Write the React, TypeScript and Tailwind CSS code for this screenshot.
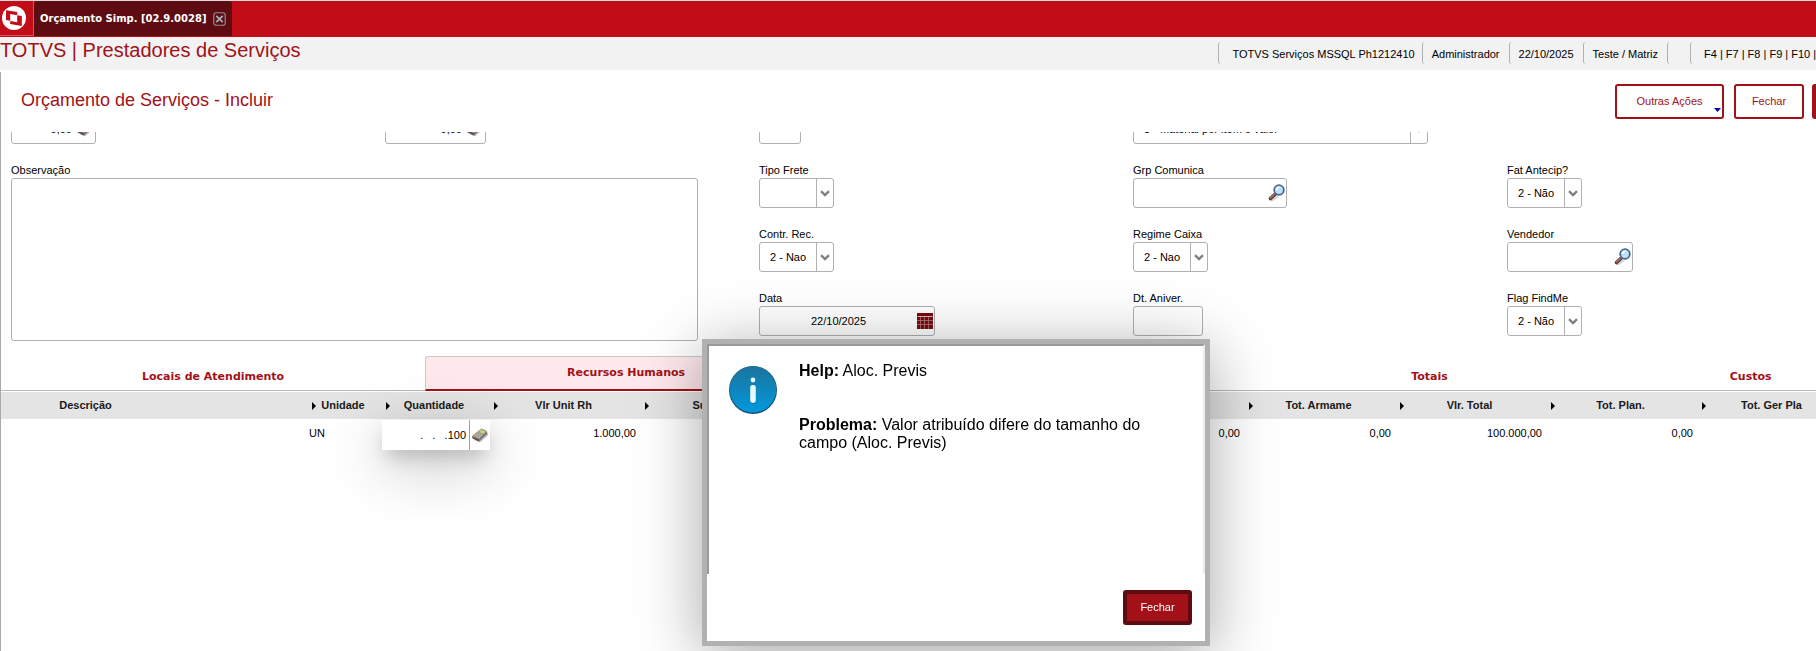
import React, { useState } from 'react';
import type { ReactNode } from 'react';

const SearchIcon = () => (
  <svg width="18" height="18" viewBox="0 0 18 18" className="shrink-0">
    <path d="M4 17 L11 12.5" stroke="#d4d4d4" strokeWidth="2" />
    <path d="M3.5 14.5 L8.5 10" stroke="#4a3a36" strokeWidth="3.6" strokeLinecap="round" />
    <path d="M3.6 13.8 L8 9.8" stroke="#a86a55" strokeWidth="1.8" strokeLinecap="round" />
    <circle cx="12" cy="6" r="4.8" fill="#bfe0f8" stroke="#44688f" strokeWidth="1.8" />
    <path d="M9.5 6a2.8 2.8 0 0 1 3-2.8" stroke="#ffffff" strokeWidth="1.8" fill="none" />
  </svg>
);

const CalculatorIcon = () => (
  <svg width="18" height="16" viewBox="0 0 18 16" className="shrink-0">
    <path d="M3 13 L9 15.5 L17.5 8 L16 5 Z" fill="#c4c4c4" />
    <path d="M1 9 L9.5 2 Q10.5 1.4 11.5 1.8 L16 4 L8 12.5 Z" fill="#a39c90" />
    <path d="M1 9 L8 12.2 L8 14.4 L1.6 11.6 Z" fill="#5b4d48" />
    <path d="M8 12.2 L16 4 L16.2 6.8 L8 14.4 Z" fill="#78706a" />
    <path d="M8 4.8 L10.5 2.8 L14.4 4.5 L12 6.8 Z" fill="#b4dc78" />
    <path d="M4 9 L8 5.8 M6 9.9 L10 6.6 M8 10.7 L11.5 7.4" stroke="#c9c2ba" strokeWidth="1" strokeDasharray="1.4 1" />
  </svg>
);

const CalendarIcon = () => (
  <svg width="16" height="16" viewBox="0 0 16 16" className="shrink-0">
    <rect width="16" height="16" fill="#7a0a0e" />
    <path d="M0.5 3.5H15.5" stroke="#d9b8ba" strokeWidth="1" />
    <path d="M0 7.5H16M0 11.5H16M3.5 4V16M7.5 4V16M11.5 4V16" stroke="#b98a8c" strokeWidth="0.7" />
  </svg>
);

const InfoIcon = () => (
  <svg width="48" height="48" viewBox="0 0 48 48" className="shrink-0">
    <defs>
      <linearGradient id="info" x1="0" y1="0" x2="0" y2="1">
        <stop offset="0" stopColor="#1b739c" />
        <stop offset="1" stopColor="#0299dd" />
      </linearGradient>
    </defs>
    <circle cx="24" cy="24" r="24" fill="#125577" />
    <circle cx="24" cy="23.4" r="23.2" fill="url(#info)" />
    <circle cx="24" cy="14" r="2.4" fill="#e4fbff" />
    <rect x="21.2" y="20" width="5.6" height="18" rx="2.4" fill="#0b6d9b" />
    <rect x="21.2" y="19" width="5.6" height="18" rx="2.4" fill="#e4fbff" />
  </svg>
);

const Logo = () => (
  <svg width="24" height="24" viewBox="0 0 24 24">
    <circle cx="12" cy="12" r="12" fill="#ffffff" />
    <path d="M4 4.3 L15.2 6 V16 L4 14 Z" fill="#c20c18" />
    <path d="M8.2 8.2 L19.8 10 V20 L8.2 18 Z" fill="#c20c18" />
    <path d="M8.2 8 L15.2 9.2 V16.2 L8.2 15 Z" fill="#ffffff" />
  </svg>
);

interface FieldProps {
  id: string;
  label?: string;
  children: ReactNode;
}

const Field = ({ id, label, children }: FieldProps) => (
  <div>
    <label htmlFor={id} className="block h-[14px] leading-3">{label}</label>
    {children}
  </div>
);

interface SelectBoxProps {
  id: string;
  label?: string;
  width?: string;
  options: string[];
}

const SelectBox = ({ id, label, width = 'w-[75px]', options }: SelectBoxProps) => (
  <Field id={id} label={label}>
    <div className={`flex h-[30px] rounded-[3px] border border-[#b0b0b0] ${width}`}>
      <select id={id} aria-label={label ?? id} className="min-w-0 flex-1 appearance-none bg-transparent pl-[10px] outline-none">
        {options.map(o => <option key={o}>{o}</option>)}
      </select>
      <span className="flex w-[17px] shrink-0 items-center justify-center border-l border-[#b0b0b0]">
        <svg width="10" height="7" viewBox="0 0 10 7">
          <path d="M1 1.2 L5 5 L9 1.2" fill="none" stroke="#808080" strokeWidth="2.4" />
        </svg>
      </span>
    </div>
  </Field>
);

interface TextBoxProps {
  id: string;
  label?: string;
  width: string;
  value?: string;
  align?: string;
  icon?: ReactNode;
}

const TextBox = ({ id, label, width, value = '', align = 'text-left', icon }: TextBoxProps) => (
  <Field id={id} label={label}>
    <div className={`flex h-[30px] items-center rounded-[3px] border border-[#b0b0b0] pr-px ${width}`}>
      <input id={id} aria-label={label ?? id} defaultValue={value} className={`h-full min-w-0 flex-1 bg-transparent outline-none ${align}`} />
      {icon}
    </div>
  </Field>
);

const tabs = ['Locais de Atendimento', 'Recursos Humanos', '', 'Totais', 'Custos'];

const columns = [
  { title: 'Descrição', width: 307, value: '' },
  { title: 'Unidade', width: 74, value: 'UN' },
  { title: 'Quantidade', width: 108, value: '100' },
  { title: 'Vlr Unit Rh', width: 151, value: '1.000,00' },
  { title: 'Subtotal', width: 151, value: '' },
  { title: '', width: 151, value: '' },
  { title: '', width: 151, value: '' },
  { title: '', width: 151, value: '0,00' },
  { title: 'Tot. Armame', width: 151, value: '0,00' },
  { title: 'Vlr. Total', width: 151, value: '100.000,00' },
  { title: 'Tot. Plan.', width: 151, value: '0,00' },
  { title: 'Tot. Ger Pla', width: 151, value: '' },
];

const TopBar = () => (
  <header>
    <div className="flex h-[37px] border-t border-[#dcdcdc] bg-[#c20c18]">
      <div className="flex h-[35px] w-[34px] items-center border-r border-b border-[#e2505a] pl-[2px]">
        <Logo />
      </div>
      <div className="flex h-[35px] items-center gap-[6px] rounded-t-[3px] bg-[#5e0c12] px-[6px]">
        <span className="font-['DejaVu_Sans',sans-serif] text-[10px] font-bold text-white">Orçamento Simp. [02.9.0028]</span>
        <button aria-label="Fechar aba">
          <svg width="13" height="14" viewBox="0 0 13 14" className="block">
            <rect x="0.75" y="0.75" width="11.5" height="12.5" rx="2.5" fill="none" stroke="#8f8a92" strokeWidth="1.2" />
            <path d="M3.3 3.8 L9.7 10.2 M9.7 3.8 L3.3 10.2" stroke="#a9adb8" strokeWidth="1.8" />
          </svg>
        </button>
      </div>
    </div>
    <div className="flex h-[33px] items-start justify-between bg-[#f2f2f2]">
      <h1 className="pt-px text-[20px] leading-6 whitespace-nowrap text-[#a31118]">TOTVS | Prestadores de Serviços</h1>
      <div className="mt-[5px] flex h-[22px] shrink-0 leading-[24px] whitespace-nowrap *:rounded-l-[3px] *:border-l *:border-[#b0b0b0] *:px-[9px]">
        <span className="pr-[7px]! pl-[13px]!">TOTVS Serviços MSSQL Ph1212410</span>
        <span>Administrador</span>
        <span>22/10/2025</span>
        <span>Teste / Matriz</span>
        <span className="w-[23px]"></span>
        <span className="w-[126px] pr-0! pl-[13px]!">F4 | F7 | F8 | F9 | F10 |</span>
      </div>
    </div>
  </header>
);

const ItemsTable = () => (
  <table className="mt-px w-[1848px] table-fixed border-collapse">
    <colgroup>
      {columns.map((c, i) => <col key={i} style={{ width: c.width }} />)}
    </colgroup>
    <thead>
      <tr className="h-[27px] bg-[#e4e4e4]">
        {columns.map((c, i) => (
          <th key={i} className="p-0 text-[#1a1a1a]">
            <div className="flex items-center">
              {i > 0 && (
                <svg width="4" height="8" viewBox="0 0 4 8" className="ml-1 shrink-0">
                  <path d="M0 0 L4 4 L0 8 Z" fill="#000000" />
                </svg>
              )}
              <span className={i > 0 ? 'flex-1 pr-3 text-center' : 'flex-1 pr-[138px] text-center'}>{c.title}</span>
            </div>
          </th>
        ))}
      </tr>
    </thead>
    <tbody>
      <tr className="h-[31px]">
        {columns.map((c, i) => (
          c.title === 'Quantidade' ? (
            <td key={i} className="p-0">
              <div className="relative mt-px flex h-[30px] items-center bg-white shadow-[0_10px_20px_-4px_rgba(0,0,0,0.22),0_15px_60px_rgba(0,0,0,0.28)]">
                <input aria-label="Quantidade" defaultValue=".   .   .100" className="h-full min-w-0 flex-1 pr-[3px] text-right outline-none" />
                <span className="flex h-full w-[21px] items-center justify-center border-l border-[#a0a0a0]">
                  <CalculatorIcon />
                </span>
              </div>
            </td>
          ) : (
            <td key={i} className={i === 1 ? 'p-0 pb-[2px] pl-px text-left' : 'p-0 pr-[5px] pb-[2px] text-right'}>{c.value}</td>
          )
        ))}
      </tr>
    </tbody>
  </table>
);

const HelpDialog = ({ onClose }: { onClose: () => void }) => (
  <div role="dialog" aria-label="Help" className="fixed top-[339px] left-[702px] flex w-[508px] flex-col border-[5px] border-[#b1b1b1] bg-white shadow-[0_10px_60px_rgba(0,0,0,0.35)]">
    <div className="flex h-[230px] gap-[22px] border-t-2 border-r-2 border-l-2 border-t-[#999999] border-r-[#ececec] border-l-[#999999] pt-4 pl-5">
      <div className="pt-1"><InfoIcon /></div>
      <div className="w-[360px] text-[16px] leading-[18px]">
        <p><b>Help:</b> Aloc. Previs</p>
        <p className="mt-9"><b>Problema:</b> Valor atribuído difere do tamanho do campo (Aloc. Previs)</p>
      </div>
    </div>
    <div className="flex h-[67px] items-start justify-end pt-4 pr-[13px]">
      <button onClick={onClose} className="h-[35px] w-[69px] rounded-[3px] border-4 border-[#5e0c12] bg-[#a31118] text-white">Fechar</button>
    </div>
  </div>
);

export default function App() {
  const [helpOpen, setHelpOpen] = useState(true);
  const [activeTab, setActiveTab] = useState('Recursos Humanos');

  return (
    <div className="flex min-h-screen flex-col overflow-hidden bg-white font-['Liberation_Sans',Arial,sans-serif] text-[11px] text-black">
      <TopBar />

      <main className="mt-[2px] flex-1 overflow-hidden border-l border-[#a8a8a8]">
        {/* Title and actions */}
        <div className="flex h-[60px] items-start justify-between pt-3 pl-5">
          <h2 className="pt-1 text-[18px] leading-6 text-[#a31118]">Orçamento de Serviços - Incluir</h2>
          <div className="flex gap-2 text-[#a31118] *:h-[35px] *:rounded-[3px] *:border-2 *:border-[#a31118]">
            <button className="relative mr-[2px] w-[109px]">
              Outras Ações
              <svg width="7" height="4" viewBox="0 0 7 4" className="absolute right-px bottom-[5px]">
                <path d="M0 0 H7 L3.5 4 Z" fill="#0000a8" />
              </svg>
            </button>
            <button className="w-[70px]">Fechar</button>
            <button aria-label="Confirmar" className="-mr-[65px] w-[69px] bg-[#a31118]"></button>
          </div>
        </div>

        {/* Form, scrolled down by half a row */}
        <div className="overflow-hidden">
          <div className="-mt-8 grid auto-rows-[44px] grid-cols-[repeat(4,374px)_1fr] gap-y-5 pb-5 pl-[10px]">
            <TextBox id="valor" width="w-[85px]" value="0,00" align="text-right pr-1" icon={<CalculatorIcon />} />
            <TextBox id="desconto" width="w-[101px]" value="0,00" align="text-right pr-1" icon={<CalculatorIcon />} />
            <TextBox id="codigo" width="w-[42px]" />
            <SelectBox id="material" width="w-[295px]" options={['3 - Material por item e valor']} />
            <div></div>

            <div className="col-span-2 row-span-3">
              <Field id="observacao" label="Observação">
                <textarea id="observacao" className="block h-[163px] w-[687px] resize-none rounded-[3px] border border-[#b0b0b0] outline-none" />
              </Field>
            </div>
            <SelectBox id="tipo-frete" label="Tipo Frete" options={['']} />
            <TextBox id="grp-comunica" label="Grp Comunica" width="w-[154px]" icon={<SearchIcon />} />
            <SelectBox id="fat-antecip" label="Fat Antecip?" options={['2 - Não']} />

            <SelectBox id="contr-rec" label="Contr. Rec." options={['2 - Nao']} />
            <SelectBox id="regime-caixa" label="Regime Caixa" options={['2 - Nao']} />
            <TextBox id="vendedor" label="Vendedor" width="w-[126px]" icon={<SearchIcon />} />

            <TextBox id="data" label="Data" width="w-[176px]" value="22/10/2025" align="text-center" icon={<CalendarIcon />} />
            <TextBox id="dt-aniver" label="Dt. Aniver." width="w-[70px]" />
            <SelectBox id="flag-findme" label="Flag FindMe" options={['2 - Não']} />
          </div>
        </div>

        {/* Tabs */}
        <div role="tablist" className="flex h-[35px] font-['DejaVu_Sans',sans-serif] font-bold whitespace-nowrap text-[#a31118]">
          {tabs.map((tab, i) => (
            tab === '' ? (
              <div key={i} className="w-[443px] shrink-0 border-b border-[#b8b8b8]"></div>
            ) : (
              <button
                key={i}
                role="tab"
                aria-selected={tab === activeTab}
                onClick={() => setActiveTab(tab)}
                className={tab === activeTab
                  ? 'shrink-0 rounded-t-[3px] border border-b-2 border-[#c8c8c8] border-b-[#a31118] bg-[#ffe9ec] px-[141px]'
                  : 'shrink-0 border-b border-[#b8b8b8] px-[141px] pt-2'}
              >
                {tab}
              </button>
            )
          ))}
        </div>

        <ItemsTable />
      </main>

      {helpOpen && <HelpDialog onClose={() => setHelpOpen(false)} />}
    </div>
  );
}
